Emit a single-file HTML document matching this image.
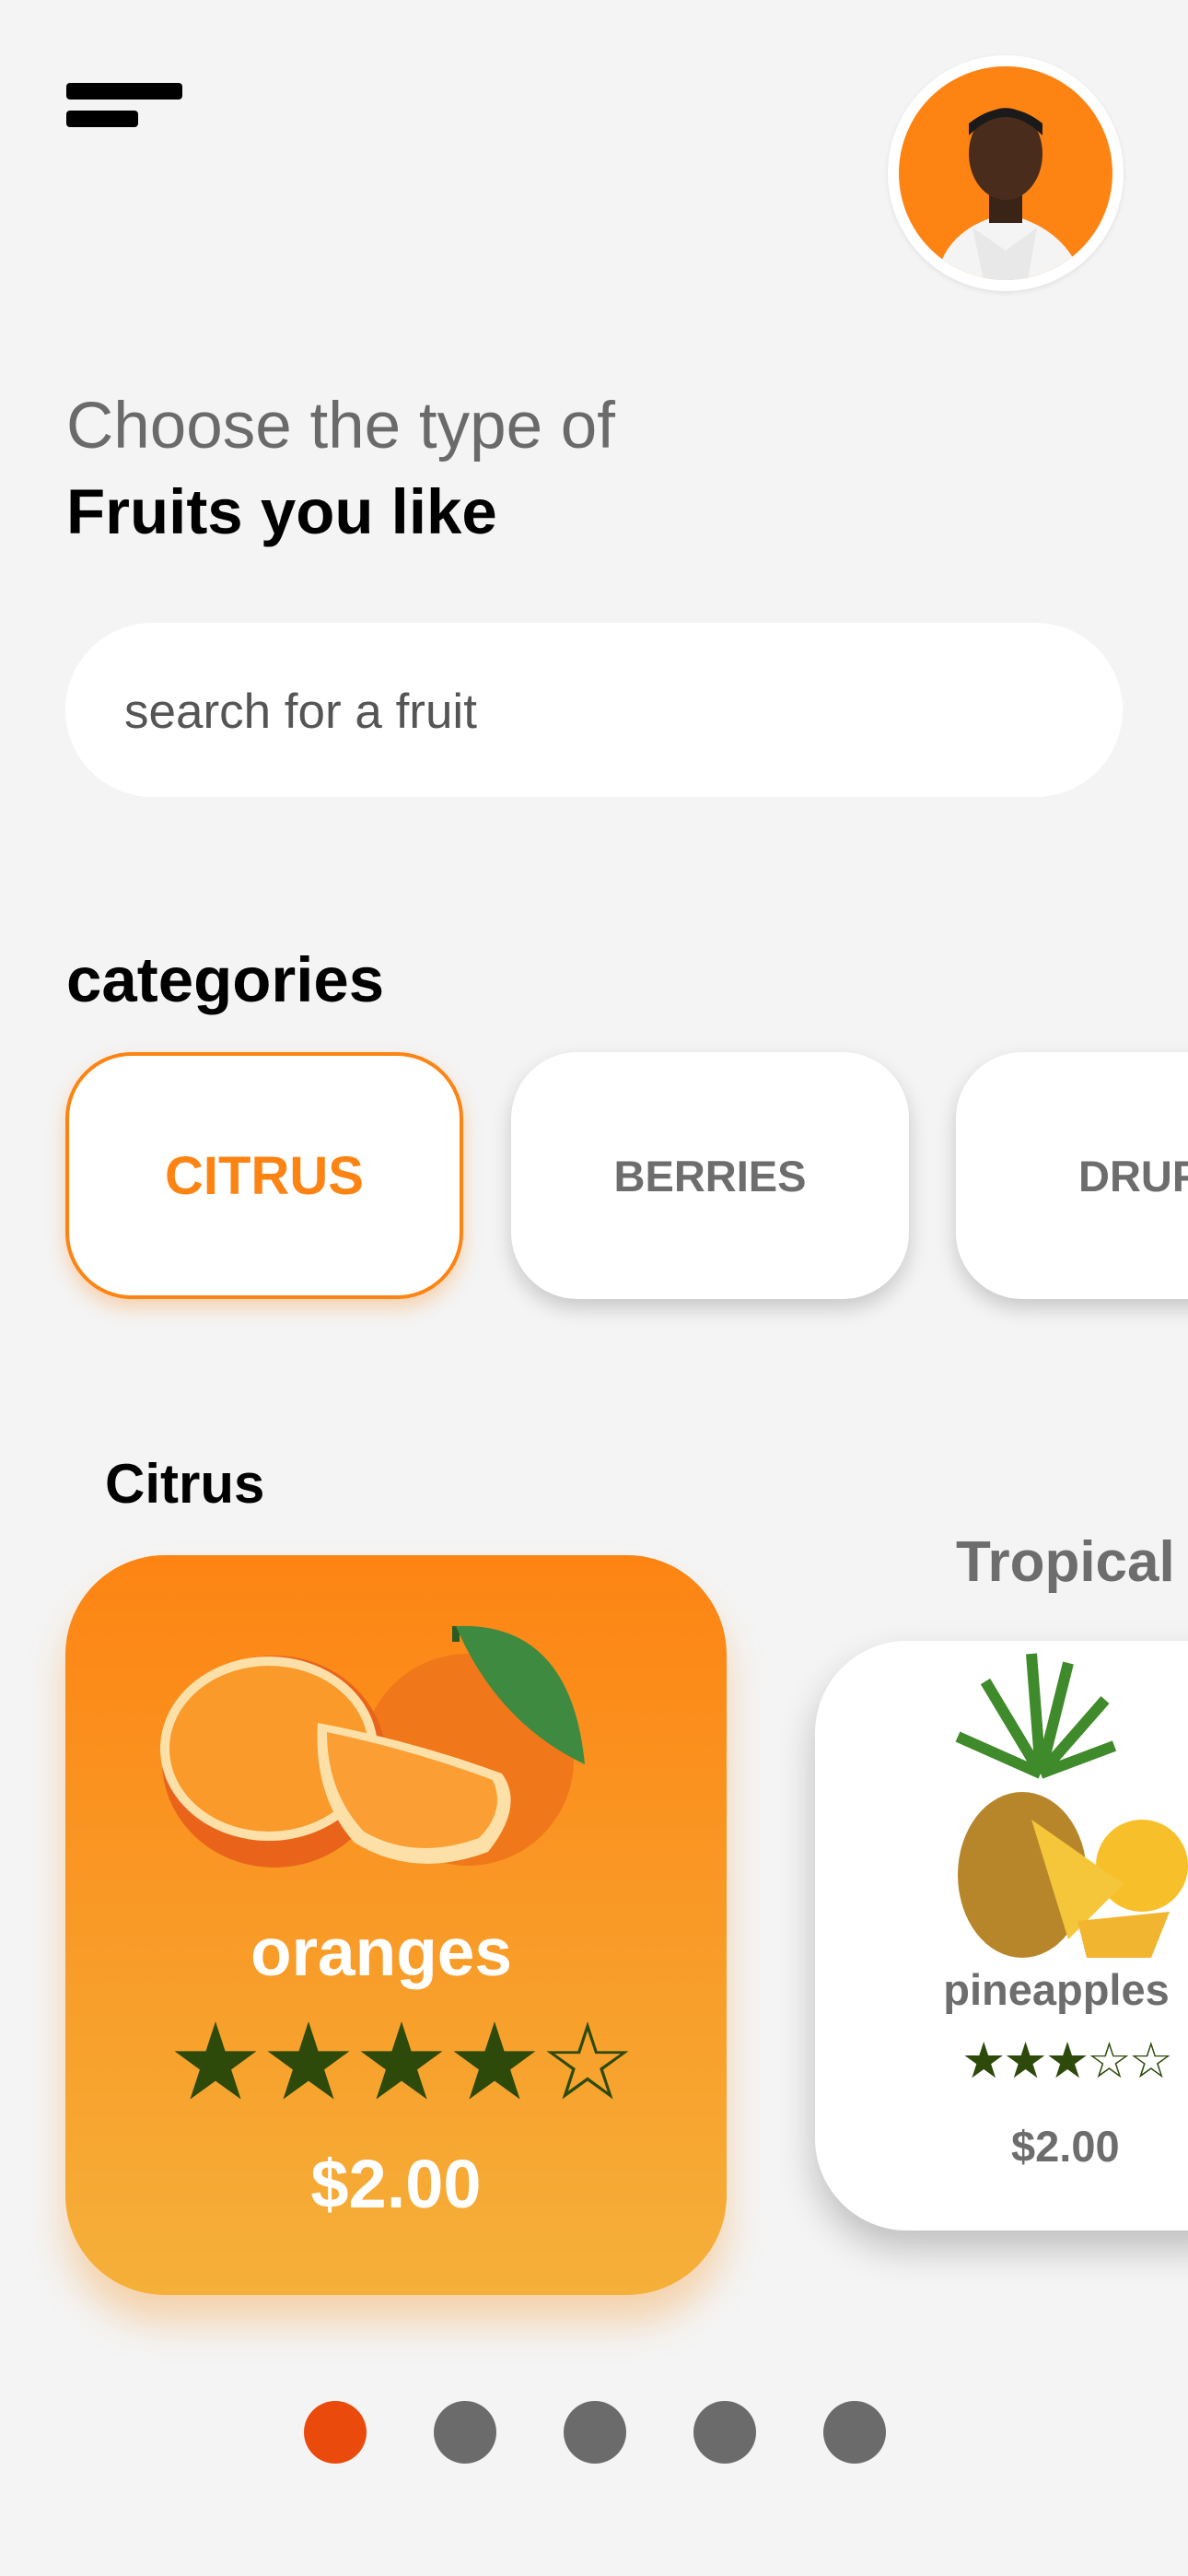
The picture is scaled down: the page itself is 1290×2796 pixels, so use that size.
<!DOCTYPE html>
<html><head><meta charset="utf-8"><style>
*{margin:0;padding:0;box-sizing:border-box}
html{width:1290px;height:2796px;overflow:hidden}
body{width:1290px;height:2796px;background:#f4f4f4;font-family:"Liberation Sans",sans-serif;position:relative;overflow:hidden}
#w{position:absolute;left:0;top:0;width:1290px;height:2796px;overflow:hidden}
.a{position:absolute}
.bar{position:absolute;background:#000;border-radius:4px}
.cat{position:absolute;top:1142px;width:432px;height:268px;border-radius:72px;background:#fff;box-shadow:0 10px 22px rgba(0,0,0,.18);display:flex;align-items:center;justify-content:center;font-weight:bold;color:#6d6d6d;font-size:47px}
.dot{position:absolute;top:2606px;width:68px;height:68px;border-radius:50%;background:#6b6b6b}
</style></head><body><div id="w">
<div class="bar" style="left:72px;top:90px;width:126px;height:18px"></div>
<div class="bar" style="left:72px;top:120px;width:78px;height:18px"></div>

<div class="a" style="left:964px;top:60px;width:256px;height:256px;border-radius:50%;background:#fff;box-shadow:0 2px 6px rgba(0,0,0,.08)"></div>
<div class="a" style="left:976px;top:72px;width:232px;height:232px;border-radius:50%;background:#fd8413;overflow:hidden">
<svg width="232" height="232" viewBox="0 0 232 232">
<path d="M40 232 Q50 175 116 160 Q182 175 200 232 Z" fill="#f4f4f4"/>
<path d="M80 175 L116 200 L150 175 L140 232 L92 232 Z" fill="#e8e8e8"/>
<rect x="98" y="120" width="36" height="50" fill="#3a2418"/>
<ellipse cx="116" cy="95" rx="40" ry="50" fill="#4a2c1c"/>
<path d="M76 75 Q116 35 156 75 L156 62 Q116 30 76 62Z" fill="#1a1a1a"/>
</svg></div>

<div class="a" style="left:72px;top:422px;font-size:71px;color:#6a6a6a">Choose the type of</div>
<div class="a" style="left:72px;top:516px;font-size:69px;font-weight:bold;color:#000">Fruits you like</div>

<div class="a" style="left:71px;top:676px;width:1148px;height:189px;border-radius:95px;background:#fff"></div>
<div class="a" style="left:135px;top:742px;font-size:53px;color:#555">search for a fruit</div>

<div class="a" style="left:72px;top:1024px;font-size:69px;font-weight:bold;color:#000">categories</div>

<div class="cat" style="left:71px;border:4px solid #fd8413;color:#fd8413;font-size:58px;box-shadow:0 10px 20px rgba(253,132,19,.3)">CITRUS</div>
<div class="cat" style="left:555px">BERRIES</div>
<div class="cat" style="left:1038px;justify-content:flex-start;padding-left:133px">DRUPES</div>

<div class="a" style="left:114px;top:1576px;font-size:60px;font-weight:bold;color:#000">Citrus</div>
<div class="a" style="left:1038px;top:1660px;font-size:62px;font-weight:bold;color:#6d6d6d">Tropical</div>

<div class="a" style="left:71px;top:1688px;width:718px;height:803px;border-radius:108px;background:linear-gradient(#fd8413,#f5b03a);box-shadow:0 30px 40px rgba(245,150,40,.35)"></div>
<svg class="a" style="left:150px;top:1720px" width="560" height="340" viewBox="0 0 560 340">
<circle cx="358" cy="190" r="115" fill="#f0781a"/>
<ellipse cx="148" cy="192" rx="122" ry="115" fill="#e9641a"/>
<ellipse cx="142" cy="178" rx="118" ry="100" fill="#fde0a8"/>
<ellipse cx="142" cy="178" rx="108" ry="90" fill="#f99a2a"/>
<path d="M345 45 L345 62" stroke="#2d5a20" stroke-width="8"/>
<path d="M345 45 Q470 40 485 195 Q390 150 345 45Z" fill="#3d8a40"/>
<path d="M195 150 Q300 170 395 205 Q420 240 380 290 Q300 320 235 280 Q190 230 195 150Z" fill="#fde0a8"/>
<path d="M205 160 Q300 180 385 212 Q400 245 370 275 Q300 300 245 268 Q205 225 205 160Z" fill="#fb9e34"/>
</svg>

<div class="a" style="left:55px;top:2078px;width:718px;text-align:center;font-size:73px;font-weight:bold;color:#fff">oranges</div>
<div class="a" style="left:182px;top:2180px;font-size:116px;line-height:116px;color:#2d4a0a;letter-spacing:-3px;white-space:nowrap">★★★★<span>☆</span></div>
<div class="a" style="left:71px;top:2328px;width:718px;text-align:center;font-size:74px;font-weight:bold;color:#fff">$2.00</div>

<div class="a" style="left:885px;top:1781px;width:520px;height:640px;border-radius:100px;background:#fff;box-shadow:0 20px 40px rgba(0,0,0,.22)"></div>
<svg class="a" style="left:1010px;top:1785px" width="280" height="345" viewBox="0 0 280 345">
<path d="M120 140 L60 40 M120 140 L110 10 M120 140 L150 20 M120 140 L190 60 M120 140 L30 100 M120 140 L200 110" stroke="#3f8a2a" stroke-width="12"/>
<ellipse cx="100" cy="250" rx="70" ry="90" fill="#b8862a"/>
<circle cx="230" cy="240" r="50" fill="#f7c02a"/>
<path d="M110 190 L210 260 L150 320 Z" fill="#f5c63a"/>
<path d="M160 300 L260 290 L240 340 L170 340Z" fill="#f2b530"/>
</svg>
<div class="a" style="left:980px;top:2132px;width:334px;text-align:center;font-size:47px;font-weight:bold;color:#6d6d6d">pineapples</div>
<div class="a" style="left:1044px;top:2210px;font-size:54px;line-height:54px;color:#2d4a0a;letter-spacing:-3px;white-space:nowrap">★★★<span>☆☆</span></div>
<div class="a" style="left:1098px;top:2302px;font-size:47px;font-weight:bold;color:#6d6d6d">$2.00</div>

<div class="dot" style="left:330px;background:#ea4a0b"></div>
<div class="dot" style="left:471px"></div>
<div class="dot" style="left:612px"></div>
<div class="dot" style="left:753px"></div>
<div class="dot" style="left:894px"></div>
</div></body></html>
